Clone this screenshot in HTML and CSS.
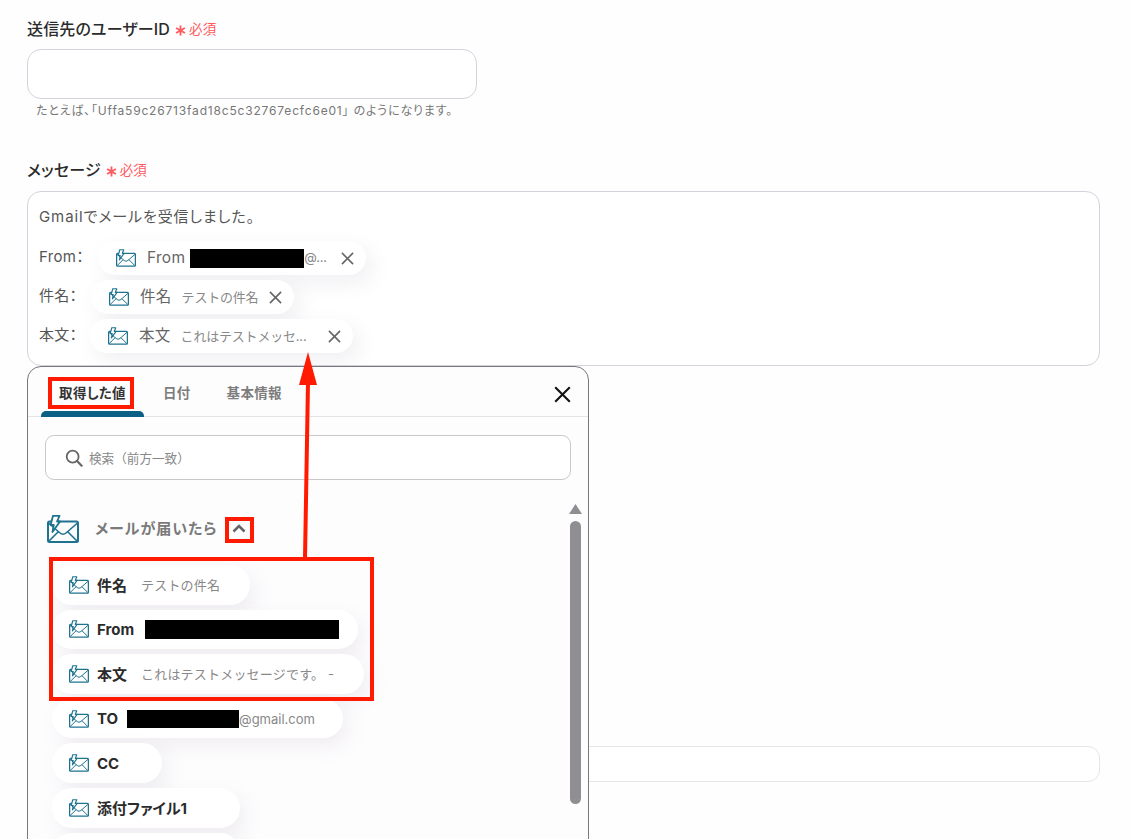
FILE: index.html
```html
<!DOCTYPE html>
<html lang="ja">
<head>
<meta charset="utf-8">
<title>メッセージ設定</title>
<link rel="stylesheet" href="styles.css">
</head>
<body>
<svg class="defs" width="0" height="0" aria-hidden="true">
  <symbol id="mail" viewBox="0 0 32 28">
    <rect x="1" y="6.5" width="30" height="20.5" rx="1.5" fill="none" stroke="currentColor" stroke-width="2"/>
    <path d="M1.5 8 L13 18 Q16 20.5 19 18 L30.5 8 M1.5 26.5 L11.5 16.5 M30.5 26.5 L20.5 16.5" fill="none" stroke="currentColor" stroke-width="1.6"/>
    <path d="M6 0.8 H12.5 L10 6.5 H13 L5.5 17 L6.8 10 H3.6 Z" fill="#fff" stroke="currentColor" stroke-width="1.8" stroke-linejoin="round"/>
  </symbol>
  <symbol id="cross" viewBox="0 0 14 14">
    <path d="M1 1 L13 13 M13 1 L1 13" fill="none" stroke="currentColor" stroke-width="1.7"/>
  </symbol>
  <symbol id="star" viewBox="0 0 12 12">
    <path d="M6 0.5 V11.5 M1.2 3.2 L10.8 8.8 M10.8 3.2 L1.2 8.8" fill="none" stroke="currentColor" stroke-width="2"/>
  </symbol>
</svg>

<main class="page">
  <section class="field">
    <h2 class="label">送信先のユーザーID<span class="req"><svg class="star"><use href="#star"/></svg>必須</span></h2>
    <div class="input"></div>
    <p class="hint">たとえば、「Uffa59c26713fad18c5c32767ecfc6e01」 のようになります。</p>
  </section>

  <section class="field field-message">
    <h2 class="label">メッセージ<span class="req"><svg class="star"><use href="#star"/></svg>必須</span></h2>
    <div class="message">
      <p class="msg-line">Gmailでメールを受信しました。</p>
      <div class="msg-row row-from">
        <span class="msg-key">From：</span>
        <span class="tag tag-from">
          <svg class="ic"><use href="#mail"/></svg>
          <span class="tag-name">From</span>
          <span class="redact redact-from"></span>
          <span class="tag-val">@...</span>
          <svg class="x"><use href="#cross"/></svg>
        </span>
      </div>
      <div class="msg-row row-subject">
        <span class="msg-key">件名：</span>
        <span class="tag tag-subject">
          <svg class="ic"><use href="#mail"/></svg>
          <span class="tag-name">件名</span>
          <span class="tag-val">テストの件名</span>
          <svg class="x"><use href="#cross"/></svg>
        </span>
      </div>
      <div class="msg-row row-body">
        <span class="msg-key">本文：</span>
        <span class="tag tag-body">
          <svg class="ic"><use href="#mail"/></svg>
          <span class="tag-name">本文</span>
          <span class="tag-val">これはテストメッセ...</span>
          <svg class="x"><use href="#cross"/></svg>
        </span>
      </div>
    </div>

    <div class="popup">
      <div class="tabs">
        <span class="tab tab-active">取得した値</span>
        <span class="tab tab-date">日付</span>
        <span class="tab tab-info">基本情報</span>
        <svg class="popup-close"><use href="#cross"/></svg>
      </div>
      <div class="search">
        <svg class="search-ic" viewBox="0 0 20 20"><circle cx="8.5" cy="8.5" r="6.6" fill="none" stroke="currentColor" stroke-width="2"/><path d="M13.4 13.4 L18.5 18.5" stroke="currentColor" stroke-width="2.4" stroke-linecap="round"/></svg>
        <span class="search-text">検索（前方一致）</span>
      </div>
      <div class="group-head">
        <svg class="group-ic"><use href="#mail"/></svg>
        <span class="group-title">メールが届いたら</span>
        <svg class="chev" viewBox="0 0 14 9"><path d="M1.5 7.5 L7 2 L12.5 7.5" fill="none" stroke="currentColor" stroke-width="2.6"/></svg>
      </div>
      <ul class="items">
        <li class="item w-subject"><svg class="ic-s"><use href="#mail"/></svg><b class="item-name">件名</b><span class="item-val">テストの件名</span></li>
        <li class="item w-from"><svg class="ic-s"><use href="#mail"/></svg><b class="item-name">From</b><span class="redact redact-list"></span></li>
        <li class="item w-body"><svg class="ic-s"><use href="#mail"/></svg><b class="item-name">本文</b><span class="item-val">これはテストメッセージです。 -</span></li>
        <li class="item w-to"><svg class="ic-s"><use href="#mail"/></svg><b class="item-name">TO</b><span class="redact redact-to"></span><span class="item-mail">@gmail.com</span></li>
        <li class="item w-cc"><svg class="ic-s"><use href="#mail"/></svg><b class="item-name">CC</b></li>
        <li class="item w-file"><svg class="ic-s"><use href="#mail"/></svg><b class="item-name">添付ファイル1</b></li>
        <li class="item w-file"></li>
      </ul>
      <div class="scroll-up"></div>
      <div class="scroll-thumb"></div>
    </div>
  </section>

  <div class="input input-below"></div>

  <span class="mark mark-tab"></span>
  <span class="mark mark-chev"></span>
  <span class="mark mark-list"></span>
  <svg class="arrow" viewBox="0 0 40 210"><path d="M17 207 L20 30" fill="none" stroke="#ff1a00" stroke-width="4"/><path d="M20 0 L29 33 L11 33 Z" fill="#ff1a00"/></svg>
</main>
</body>
</html>
```
FILE: styles.css
```css
* { box-sizing: border-box; }
html, body { margin: 0; height: 100%; }
body {
  background: #fefefe;
  color: #333;
  font-family: Inter, "Noto Sans CJK JP", sans-serif;
  font-feature-settings: "palt";
  overflow: hidden;
}
.defs { position: absolute; }
.page {
  position: relative;
  height: 839px;
  overflow: hidden;
  padding: 19px 32px 0 27px;
}
.label {
  margin: 0;
  height: 20px;
  line-height: 20px;
  font-size: 16px;
  font-weight: 500;
  color: #2b2b2b;
  letter-spacing: 0.15px;
  display: flex;
  align-items: center;
}
.req {
  display: inline-flex;
  align-items: center;
  margin-left: 5px;
  font-size: 13.5px;
  font-weight: 400;
  color: #ff5a5f;
}
.star { width: 11px; height: 11px; margin: 3px 3px 0 0; flex: none; }
.input {
  margin-top: 10px;
  width: 450px;
  height: 50px;
  background: #fff;
  border: 1px solid #d3d3de;
  border-radius: 14px;
}
.hint {
  margin: 5px 0 0 9px;
  height: 14px;
  line-height: 14px;
  font-size: 12px;
  color: #777;
  letter-spacing: 0.82px;
}
.field-message { margin-top: 42px; position: relative; }
.message {
  margin-top: 11px;
  height: 175px;
  background: #fff;
  border: 1px solid #d3d3de;
  border-radius: 14px;
  padding: 15px 11px 0;
  font-size: 15px;
  color: #555;
  letter-spacing: 0.3px;
}
.msg-line { margin: 0; height: 20px; line-height: 20px; letter-spacing: 0.9px; }
.msg-row { display: flex; align-items: center; height: 34px; }
.row-from { margin-top: 14px; }
.row-subject { margin-top: 5px; }
.row-body { margin-top: 5px; }
.msg-key { line-height: 20px; margin-top: -2px; }
.row-from .msg-key { width: 59px; }
.row-subject .msg-key { width: 52px; }
.row-body .msg-key { width: 51px; }
.tag {
  display: flex;
  align-items: center;
  height: 34px;
  border-radius: 17px;
  background: #fff;
  box-shadow: 6px 8px 20px rgba(120, 110, 140, 0.11);
  padding-left: 18px;
  color: #666;
}
.tag-from { width: 268px; }
.tag-subject { width: 203px; }
.tag-body { width: 263px; }
.ic { width: 20px; height: 18px; color: #1f7390; flex: none; }
.tag-name { margin-left: 11px; font-size: 15.5px; line-height: 20px; margin-top: -1px; }
.tag-val { font-size: 13px; color: #888; margin-left: 10px; letter-spacing: -0.2px; font-feature-settings: normal; white-space: nowrap; margin-top: -2px; }
.x { width: 13px; height: 13px; color: #666; flex: none; margin-left: auto; margin-right: 12px; }
.redact { display: block; background: #000; flex: none; }
.redact-from { width: 114px; height: 19px; margin-left: 5px; }
.redact-from + .tag-val { margin-left: 0; }

.popup {
  position: absolute;
  left: 0;
  top: 206px;
  width: 562px;
  height: 560px;
  background: #fefdfe;
  border: 1px solid #77777c;
  border-radius: 14px;
}
.tabs {
  position: relative;
  height: 50px;
  border-bottom: 1px solid #e4e4e6;
  display: flex;
  font-size: 13.5px;
  font-weight: 700;
  color: #7d7d7d;
  letter-spacing: 0.3px;
}
.tab { line-height: 52px; height: 50px; }
.tab-active {
  margin-left: 13px;
  width: 103px;
  text-align: center;
  color: #333;
  position: relative;
}
.tab-active::after {
  content: "";
  position: absolute;
  left: 0;
  right: 0;
  bottom: 0;
  height: 6px;
  background: #0c5f85;
  border-radius: 5px 5px 0 0;
}
.tab-date { margin-left: 19px; }
.tab-info { margin-left: 36px; }
.popup-close {
  position: absolute;
  right: 17px;
  top: 19px;
  width: 17px;
  height: 17px;
  color: #111;
}
.search {
  margin: 18px 17px 0;
  height: 45px;
  border: 1px solid #c9c9cc;
  border-radius: 9px;
  background: #fff;
  display: flex;
  align-items: center;
  padding-left: 19px;
}
.search-ic { width: 18px; height: 18px; color: #666; flex: none; }
.search-text { margin-left: 6px; font-size: 12.6px; color: #888; font-feature-settings: normal; }
.group-head {
  display: flex;
  align-items: center;
  height: 30px;
  margin: 34px 0 0 19px;
}
.group-ic { width: 32px; height: 28px; color: #1f7390; flex: none; }
.group-title { margin: -3px 0 0 16px; font-size: 15px; font-weight: 700; color: #7a7a7a; letter-spacing: 0.95px; }
.chev { width: 14px; height: 9px; margin: -1px 0 0 15px; color: #666; flex: none; }
.items { list-style: none; margin: 21px 0 0 24px; padding: 0; display: flex; flex-direction: column; gap: 5px; }
.item {
  display: flex;
  align-items: center;
  height: 39.6px;
  border-radius: 20px;
  background: #fff;
  box-shadow: 6px 8px 20px rgba(120, 110, 140, 0.11);
  padding-left: 17px;
  flex: none;
}
.w-subject { width: 198px; }
.w-from { width: 306px; }
.w-body { width: 312px; }
.w-to { width: 291px; }
.w-cc { width: 110px; }
.w-file { width: 188px; }
.ic-s { width: 20px; height: 18px; color: #1f7390; flex: none; }
.item-name { margin-left: 8px; font-size: 15px; font-weight: 700; color: #2b2b2b; }
.item-val { margin-left: 14px; font-size: 13px; color: #888; letter-spacing: 0.2px; font-feature-settings: normal; white-space: nowrap; }
.item-mail { font-size: 13px; color: #888; }
.redact-list { width: 194px; height: 19px; margin-left: 11px; }
.redact-to { width: 112px; height: 18px; margin-left: 9px; }
.scroll-up {
  position: absolute;
  left: 541px;
  top: 137px;
  width: 13px;
  height: 10px;
  background: #908e92;
  clip-path: polygon(50% 0, 100% 100%, 0 100%);
}
.scroll-thumb {
  position: absolute;
  left: 542px;
  top: 154px;
  width: 11px;
  height: 283px;
  background: #908e92;
  border-radius: 6px;
}
.input-below {
  width: 100%;
  height: 36px;
  margin-top: 380px;
  border-color: #e6e6e6;
  border-radius: 12px;
}
.mark { position: absolute; border: 4px solid #ff1a00; pointer-events: none; }
.mark-tab { left: 48px; top: 377px; width: 86px; height: 32px; }
.mark-chev { left: 225px; top: 517px; width: 29px; height: 26px; }
.mark-list { left: 49px; top: 557px; width: 325px; height: 144px; }
.arrow { position: absolute; left: 288px; top: 352px; width: 40px; height: 210px; }
```
